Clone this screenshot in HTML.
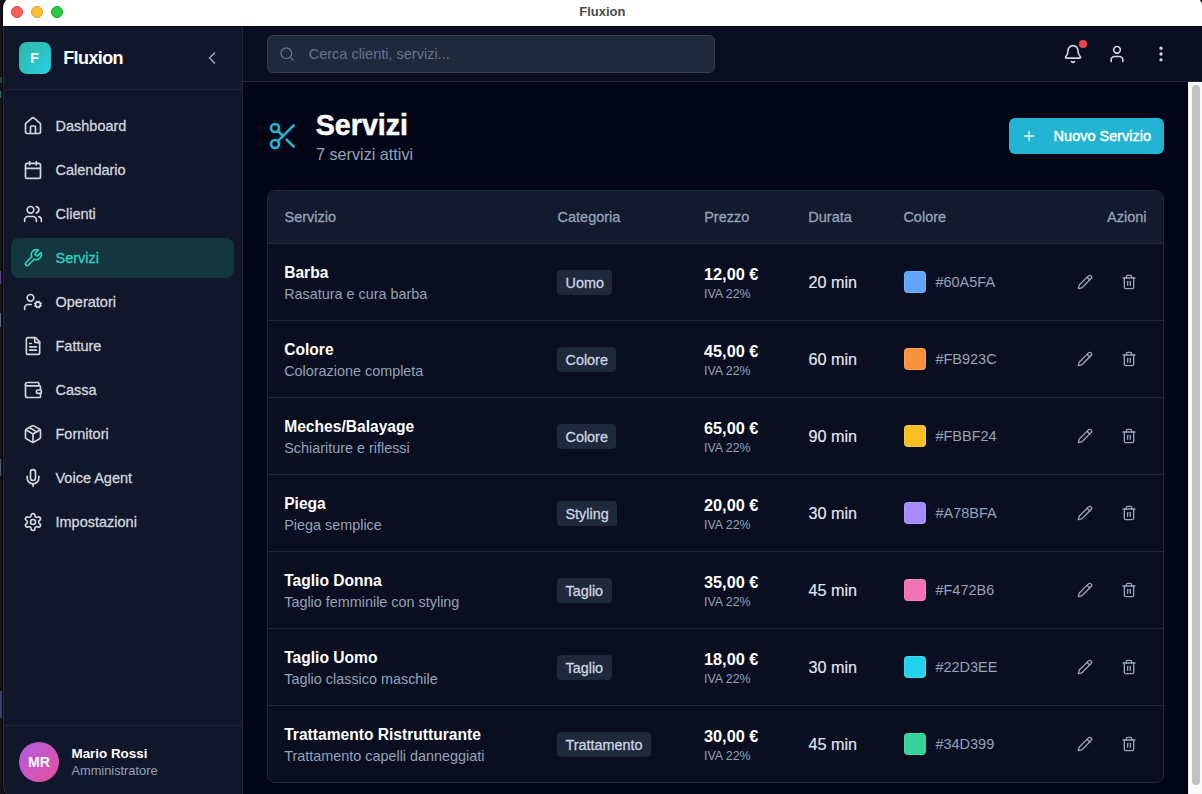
<!DOCTYPE html><html><head><meta charset="utf-8"><style>
html,body{margin:0;padding:0;width:1202px;height:794px;overflow:hidden;background:#141418;font-family:"Liberation Sans", sans-serif;}
.t{position:absolute;white-space:nowrap;line-height:1;}
.ic{position:absolute;display:block;}
.r{position:absolute;}
</style></head><body>
<div class="r" style="left:0;top:77px;width:2px;height:6px;background:#1d4843;"></div>
<div class="r" style="left:0;top:91px;width:1px;height:7px;background:#2a6f7a;"></div>
<div class="r" style="left:0;top:271px;width:1px;height:13px;background:#5a4a8a;"></div>
<div class="r" style="left:0;top:313px;width:1px;height:14px;background:#4d6788;"></div>
<div class="r" style="left:0;top:459px;width:1px;height:17px;background:#4f5d78;"></div>
<div class="r" style="left:0;top:691px;width:2px;height:27px;background:#2f4372;"></div>
<div class="r" style="left:2px;top:-5px;width:1202px;height:804px;background:#08080c;border-radius:13px;"></div>
<div class="r" style="left:3px;top:-4px;width:1200px;height:802px;background:#020617;border-radius:12px;overflow:hidden;"></div>
<div class="r" style="left:3px;top:-4px;width:1200px;height:30px;background:#ffffff;border-radius:12px 12px 0 0;"></div>
<div class="r" style="left:3px;top:26px;width:1202px;height:1px;background:#01040f;"></div>
<div class="r" style="box-sizing:border-box;left:11px;top:6px;width:12px;height:12px;border-radius:50%;background:#fe5f57;border:0.5px solid #e0443e;"></div>
<div class="r" style="box-sizing:border-box;left:31px;top:6px;width:12px;height:12px;border-radius:50%;background:#febc2e;border:0.5px solid #dea123;"></div>
<div class="r" style="box-sizing:border-box;left:51px;top:6px;width:12px;height:12px;border-radius:50%;background:#28c840;border:0.5px solid #1aab29;"></div>
<div class="t" style="left:602.3px;transform:translateX(-50%);top:5.00px;font-size:13px;color:#4a4a4a;font-weight:700;">Fluxion</div>
<div class="r" style="left:3px;top:27px;width:239px;height:771px;background:#10172a;border-right:1px solid #1e293b;border-bottom-left-radius:12px;"></div>
<div class="r" style="left:3px;top:27px;width:30px;height:771px;border-bottom-left-radius:12px;box-shadow:inset 1px 0 0 #242c3b;"></div>
<div class="r" style="left:3px;top:89px;width:239px;height:1px;background:#1e293b;"></div>
<div class="r" style="left:3px;top:725px;width:239px;height:1px;background:#1e293b;"></div>
<div class="r" style="left:19px;top:42px;width:32px;height:32px;border-radius:8px;background:linear-gradient(135deg,#2db8a8,#2ad0e2);"></div>
<div class="t" style="left:34.6px;transform:translateX(-50%);top:51.15px;font-size:14px;color:#ffffff;font-weight:700;">F</div>
<div class="t" style="left:63.2px;top:48.76px;font-size:18px;color:#ffffff;font-weight:700;letter-spacing:-0.6px;">Fluxion</div>
<svg class="ic" style="left:202px;top:48px;" width="20" height="20" viewBox="0 0 24 24" fill="none" stroke="#94a3b8" stroke-width="2" stroke-linecap="round" stroke-linejoin="round"><path d="m15 18-6-6 6-6"/></svg>
<svg class="ic" style="left:23px;top:116px;" width="20" height="20" viewBox="0 0 24 24" fill="none" stroke="#d1d6df" stroke-width="2" stroke-linecap="round" stroke-linejoin="round"><path d="M15 21v-8a1 1 0 0 0-1-1h-4a1 1 0 0 0-1 1v8"/><path d="M3 10a2 2 0 0 1 .709-1.528l7-5.999a2 2 0 0 1 2.582 0l7 5.999A2 2 0 0 1 21 10v9a2 2 0 0 1-2 2H5a2 2 0 0 1-2-2z"/></svg>
<div class="t" style="left:55.5px;top:118.73px;font-size:14.5px;color:#d1d6df;-webkit-text-stroke:0.3px currentColor;">Dashboard</div>
<svg class="ic" style="left:23px;top:160px;" width="20" height="20" viewBox="0 0 24 24" fill="none" stroke="#d1d6df" stroke-width="2" stroke-linecap="round" stroke-linejoin="round"><path d="M8 2v4"/><path d="M16 2v4"/><rect width="18" height="18" x="3" y="4" rx="2"/><path d="M3 10h18"/></svg>
<div class="t" style="left:55.5px;top:162.73px;font-size:14.5px;color:#d1d6df;-webkit-text-stroke:0.3px currentColor;">Calendario</div>
<svg class="ic" style="left:23px;top:204px;" width="20" height="20" viewBox="0 0 24 24" fill="none" stroke="#d1d6df" stroke-width="2" stroke-linecap="round" stroke-linejoin="round"><path d="M16 21v-2a4 4 0 0 0-4-4H6a4 4 0 0 0-4 4v2"/><circle cx="9" cy="7" r="4"/><path d="M22 21v-2a4 4 0 0 0-3-3.87"/><path d="M16 3.13a4 4 0 0 1 0 7.75"/></svg>
<div class="t" style="left:55.5px;top:206.73px;font-size:14.5px;color:#d1d6df;-webkit-text-stroke:0.3px currentColor;">Clienti</div>
<div class="r" style="left:11px;top:238px;width:223px;height:40px;border-radius:8px;background:#14363f;"></div>
<svg class="ic" style="left:23px;top:248px;" width="20" height="20" viewBox="0 0 24 24" fill="none" stroke="#2dd4bf" stroke-width="2" stroke-linecap="round" stroke-linejoin="round"><path d="M14.7 6.3a1 1 0 0 0 0 1.4l1.6 1.6a1 1 0 0 0 1.4 0l3.77-3.77a6 6 0 0 1-7.94 7.94l-6.91 6.91a2.12 2.12 0 0 1-3-3l6.91-6.91a6 6 0 0 1 7.94-7.94l-3.76 3.76z"/></svg>
<div class="t" style="left:55.5px;top:250.73px;font-size:14.5px;color:#2dd4bf;-webkit-text-stroke:0.3px currentColor;">Servizi</div>
<svg class="ic" style="left:23px;top:292px;" width="20" height="20" viewBox="0 0 24 24" fill="none" stroke="#d1d6df" stroke-width="2" stroke-linecap="round" stroke-linejoin="round"><circle cx="18" cy="15" r="3"/><circle cx="9" cy="7" r="4"/><path d="M10 15H6a4 4 0 0 0-4 4v2"/><path d="m21.7 16.4-.9-.3"/><path d="m15.2 13.9-.9-.3"/><path d="m16.6 18.7.3-.9"/><path d="m19.1 12.2.3-.9"/><path d="m19.6 18.7-.4-1"/><path d="m16.8 12.3-.4-1"/><path d="m14.3 16.6 1-.4"/><path d="m20.7 13.8 1-.4"/></svg>
<div class="t" style="left:55.5px;top:294.73px;font-size:14.5px;color:#d1d6df;-webkit-text-stroke:0.3px currentColor;">Operatori</div>
<svg class="ic" style="left:23px;top:336px;" width="20" height="20" viewBox="0 0 24 24" fill="none" stroke="#d1d6df" stroke-width="2" stroke-linecap="round" stroke-linejoin="round"><path d="M15 2H6a2 2 0 0 0-2 2v16a2 2 0 0 0 2 2h12a2 2 0 0 0 2-2V7Z"/><path d="M14 2v4a2 2 0 0 0 2 2h4"/><path d="M10 9H8"/><path d="M16 13H8"/><path d="M16 17H8"/></svg>
<div class="t" style="left:55.5px;top:338.73px;font-size:14.5px;color:#d1d6df;-webkit-text-stroke:0.3px currentColor;">Fatture</div>
<svg class="ic" style="left:23px;top:380px;" width="20" height="20" viewBox="0 0 24 24" fill="none" stroke="#d1d6df" stroke-width="2" stroke-linecap="round" stroke-linejoin="round"><path d="M19 7V4a1 1 0 0 0-1-1H5a2 2 0 0 0 0 4h15a1 1 0 0 1 1 1v4h-3a2 2 0 0 0 0 4h3a1 1 0 0 0 1-1v-2a1 1 0 0 0-1-1"/><path d="M3 5v14a2 2 0 0 0 2 2h15a1 1 0 0 0 1-1v-4"/></svg>
<div class="t" style="left:55.5px;top:382.73px;font-size:14.5px;color:#d1d6df;-webkit-text-stroke:0.3px currentColor;">Cassa</div>
<svg class="ic" style="left:23px;top:424px;" width="20" height="20" viewBox="0 0 24 24" fill="none" stroke="#d1d6df" stroke-width="2" stroke-linecap="round" stroke-linejoin="round"><path d="m7.5 4.27 9 5.15"/><path d="M21 8a2 2 0 0 0-1-1.73l-7-4a2 2 0 0 0-2 0l-7 4A2 2 0 0 0 3 8v8a2 2 0 0 0 1 1.73l7 4a2 2 0 0 0 2 0l7-4A2 2 0 0 0 21 16Z"/><path d="m3.3 7 8.7 5 8.7-5"/><path d="M12 22V12"/></svg>
<div class="t" style="left:55.5px;top:426.73px;font-size:14.5px;color:#d1d6df;-webkit-text-stroke:0.3px currentColor;">Fornitori</div>
<svg class="ic" style="left:23px;top:468px;" width="20" height="20" viewBox="0 0 24 24" fill="none" stroke="#d1d6df" stroke-width="2" stroke-linecap="round" stroke-linejoin="round"><path d="M12 2a3 3 0 0 0-3 3v7a3 3 0 0 0 6 0V5a3 3 0 0 0-3-3Z"/><path d="M19 10v2a7 7 0 0 1-14 0v-2"/><line x1="12" x2="12" y1="19" y2="22"/></svg>
<div class="t" style="left:55.5px;top:470.73px;font-size:14.5px;color:#d1d6df;-webkit-text-stroke:0.3px currentColor;">Voice Agent</div>
<svg class="ic" style="left:23px;top:512px;" width="20" height="20" viewBox="0 0 24 24" fill="none" stroke="#d1d6df" stroke-width="2" stroke-linecap="round" stroke-linejoin="round"><path d="M12.22 2h-.44a2 2 0 0 0-2 2v.18a2 2 0 0 1-1 1.73l-.43.25a2 2 0 0 1-2 0l-.15-.08a2 2 0 0 0-2.73.73l-.22.38a2 2 0 0 0 .73 2.73l.15.1a2 2 0 0 1 1 1.72v.51a2 2 0 0 1-1 1.74l-.15.09a2 2 0 0 0-.73 2.73l.22.38a2 2 0 0 0 2.73.73l.15-.08a2 2 0 0 1 2 0l.43.25a2 2 0 0 1 1 1.73V20a2 2 0 0 0 2 2h.44a2 2 0 0 0 2-2v-.18a2 2 0 0 1 1-1.73l.43-.25a2 2 0 0 1 2 0l.15.08a2 2 0 0 0 2.730-.73l.22-.39a2 2 0 0 0-.73-2.73l-.15-.08a2 2 0 0 1-1-1.740v-.5a2 2 0 0 1 1-1.74l.15-.09a2 2 0 0 0 .73-2.73l-.22-.38a2 2 0 0 0-2.73-.73l-.15.08a2 2 0 0 1-2 0l-.43-.25a2 2 0 0 1-1-1.73V4a2 2 0 0 0-2-2z"/><circle cx="12" cy="12" r="3"/></svg>
<div class="t" style="left:55.5px;top:514.73px;font-size:14.5px;color:#d1d6df;-webkit-text-stroke:0.3px currentColor;">Impostazioni</div>
<div class="r" style="left:19px;top:742px;width:40px;height:40px;border-radius:50%;background:linear-gradient(135deg,#b35ce6,#e64f9c);"></div>
<div class="t" style="left:39px;transform:translateX(-50%);top:754.78px;font-size:14.2px;color:#ffffff;font-weight:700;">MR</div>
<div class="t" style="left:71.5px;top:747.26px;font-size:13.4px;color:#ffffff;font-weight:700;">Mario Rossi</div>
<div class="t" style="left:71.5px;top:765.16px;font-size:12.8px;color:#94a3b8;">Amministratore</div>
<div class="r" style="left:243px;top:27px;width:959px;height:54px;background:#090e20;border-bottom:1px solid #1e293b;"></div>
<div class="r" style="left:267px;top:35px;width:446px;height:36px;border-radius:6px;background:#1e293b;border:1px solid #334155;"></div>
<svg class="ic" style="left:279px;top:46px;" width="16" height="16" viewBox="0 0 24 24" fill="none" stroke="#64748b" stroke-width="2" stroke-linecap="round" stroke-linejoin="round"><circle cx="11" cy="11" r="8"/><path d="m21 21-4.3-4.3"/></svg>
<div class="t" style="left:308.7px;top:46.93px;font-size:14.5px;color:#64748b;">Cerca clienti, servizi...</div>
<svg class="ic" style="left:1063px;top:44px;" width="20" height="20" viewBox="0 0 24 24" fill="none" stroke="#d1d6df" stroke-width="2" stroke-linecap="round" stroke-linejoin="round"><path d="M10.268 21a2 2 0 0 0 3.464 0"/><path d="M3.262 15.326A1 1 0 0 0 4 17h16a1 1 0 0 0 .74-1.673C19.41 13.956 18 12.499 18 8A6 6 0 0 0 6 8c0 4.499-1.411 5.956-2.738 7.326"/></svg>
<div class="r" style="left:1079px;top:40px;width:8px;height:8px;border-radius:50%;background:#ef4444;"></div>
<svg class="ic" style="left:1107px;top:44px;" width="20" height="20" viewBox="0 0 24 24" fill="none" stroke="#d1d6df" stroke-width="2" stroke-linecap="round" stroke-linejoin="round"><path d="M19 21v-2a4 4 0 0 0-4-4H9a4 4 0 0 0-4 4v2"/><circle cx="12" cy="7" r="4"/></svg>
<svg class="ic" style="left:1151px;top:44px;" width="20" height="20" viewBox="0 0 24 24" fill="none" stroke="#d1d6df" stroke-width="2" stroke-linecap="round" stroke-linejoin="round"><circle cx="12" cy="12" r="1"/><circle cx="12" cy="5" r="1"/><circle cx="12" cy="19" r="1"/></svg>
<div class="r" style="left:1188px;top:82px;width:14px;height:712px;background:#fafafa;border-left:1px solid #ececec;"></div>
<div class="r" style="left:1192px;top:85px;width:8px;height:700px;border-radius:4px;background:#c2c2c2;"></div>
<svg class="ic" style="left:267px;top:120px;" width="32" height="32" viewBox="0 0 24 24" fill="none" stroke="#22b4d2" stroke-width="2" stroke-linecap="round" stroke-linejoin="round"><circle cx="6" cy="6" r="3"/><path d="M8.12 8.12 12 12"/><path d="M20 4 8.12 15.88"/><circle cx="6" cy="18" r="3"/><path d="M14.8 14.8 20 20"/></svg>
<div class="t" style="left:315.8px;top:110.69px;font-size:28.6px;color:#ffffff;font-weight:700;-webkit-text-stroke:0.5px currentColor;">Servizi</div>
<div class="t" style="left:316px;top:145.79px;font-size:16.2px;color:#94a3b8;">7 servizi attivi</div>
<div class="r" style="left:1009px;top:118px;width:155px;height:36px;border-radius:6px;background:#22b4d2;"></div>
<svg class="ic" style="left:1021px;top:128px;" width="16" height="16" viewBox="0 0 24 24" fill="none" stroke="rgba(255,255,255,0.85)" stroke-width="2" stroke-linecap="round" stroke-linejoin="round"><path d="M5 12h14"/><path d="M12 5v14"/></svg>
<div class="t" style="left:1053.6px;top:128.63px;font-size:14.5px;color:#ffffff;-webkit-text-stroke:0.45px currentColor;">Nuovo Servizio</div>
<div class="r" style="left:267px;top:190px;width:895px;height:591px;border:1px solid #1e293b;border-radius:8px;background:#090e20;overflow:hidden;">
<div class="r" style="left:0;top:0;width:895px;height:52px;background:#121a2d;border-bottom:1px solid #1e293b;"></div>
<div class="r" style="left:0;top:129px;width:895px;height:1px;background:#1e293b;"></div>
<div class="r" style="left:0;top:206px;width:895px;height:1px;background:#1e293b;"></div>
<div class="r" style="left:0;top:283px;width:895px;height:1px;background:#1e293b;"></div>
<div class="r" style="left:0;top:360px;width:895px;height:1px;background:#1e293b;"></div>
<div class="r" style="left:0;top:437px;width:895px;height:1px;background:#1e293b;"></div>
<div class="r" style="left:0;top:514px;width:895px;height:1px;background:#1e293b;"></div>
</div>
<div class="t" style="left:284.5px;top:209.83px;font-size:14.5px;color:#94a3b8;-webkit-text-stroke:0.3px currentColor;">Servizio</div>
<div class="t" style="left:557.5px;top:209.83px;font-size:14.5px;color:#94a3b8;-webkit-text-stroke:0.3px currentColor;">Categoria</div>
<div class="t" style="left:704.2px;top:209.83px;font-size:14.5px;color:#94a3b8;-webkit-text-stroke:0.3px currentColor;">Prezzo</div>
<div class="t" style="left:808.3px;top:209.83px;font-size:14.5px;color:#94a3b8;-webkit-text-stroke:0.3px currentColor;">Durata</div>
<div class="t" style="left:903.4px;top:209.83px;font-size:14.5px;color:#94a3b8;-webkit-text-stroke:0.3px currentColor;">Colore</div>
<div class="t" style="right:55.5px;top:209.83px;font-size:14.5px;color:#94a3b8;-webkit-text-stroke:0.3px currentColor;">Azioni</div>
<div class="t" style="left:284.2px;top:265.29px;font-size:15.6px;color:#ffffff;font-weight:700;">Barba</div>
<div class="t" style="left:284.2px;top:287.01px;font-size:14.4px;color:#94a3b8;">Rasatura e cura barba</div>
<div class="r" style="left:557px;top:270px;height:25px;padding:0 8.5px;border-radius:4px;background:#1e293b;font-size:14.4px;line-height:26px;color:#cbd5e1;white-space:nowrap;-webkit-text-stroke:0.3px currentColor;">Uomo</div>
<div class="t" style="left:704px;top:265.70px;font-size:16.3px;color:#ffffff;font-weight:700;">12,00 €</div>
<div class="t" style="left:704px;top:287.80px;font-size:12.4px;color:#94a3b8;">IVA 22%</div>
<div class="t" style="left:808.5px;top:274.19px;font-size:16.2px;color:#e2e8f0;-webkit-text-stroke:0.15px currentColor;">20 min</div>
<div class="r" style="left:904px;top:271px;width:20px;height:20px;border-radius:4px;background:#60A5FA;border:1px solid rgba(255,255,255,0.12);"></div>
<div class="t" style="left:935.4px;top:274.93px;font-size:14.5px;color:#94a3b8;">#60A5FA</div>
<svg class="ic" style="left:1077px;top:274px;" width="16" height="16" viewBox="0 0 24 24" fill="none" stroke="#94a3b8" stroke-width="2" stroke-linecap="round" stroke-linejoin="round"><path d="M21.174 6.812a1 1 0 0 0-3.986-3.987L3.842 16.174a2 2 0 0 0-.5.83l-1.321 4.352a.5.5 0 0 0 .623.622l4.353-1.32a2 2 0 0 0 .83-.497z"/><path d="m15 5 4 4"/></svg>
<svg class="ic" style="left:1121px;top:274px;" width="16" height="16" viewBox="0 0 24 24" fill="none" stroke="#94a3b8" stroke-width="2" stroke-linecap="round" stroke-linejoin="round"><path d="M3 6h18"/><path d="M19 6v14c0 1-1 2-2 2H7c-1 0-2-1-2-2V6"/><path d="M8 6V4c0-1 1-2 2-2h4c1 0 2 1 2 2v2"/><line x1="10" x2="10" y1="11" y2="17"/><line x1="14" x2="14" y1="11" y2="17"/></svg>
<div class="t" style="left:284.2px;top:342.29px;font-size:15.6px;color:#ffffff;font-weight:700;">Colore</div>
<div class="t" style="left:284.2px;top:364.01px;font-size:14.4px;color:#94a3b8;">Colorazione completa</div>
<div class="r" style="left:557px;top:347px;height:25px;padding:0 8.5px;border-radius:4px;background:#1e293b;font-size:14.4px;line-height:26px;color:#cbd5e1;white-space:nowrap;-webkit-text-stroke:0.3px currentColor;">Colore</div>
<div class="t" style="left:704px;top:342.70px;font-size:16.3px;color:#ffffff;font-weight:700;">45,00 €</div>
<div class="t" style="left:704px;top:364.80px;font-size:12.4px;color:#94a3b8;">IVA 22%</div>
<div class="t" style="left:808.5px;top:351.19px;font-size:16.2px;color:#e2e8f0;-webkit-text-stroke:0.15px currentColor;">60 min</div>
<div class="r" style="left:904px;top:348px;width:20px;height:20px;border-radius:4px;background:#FB923C;border:1px solid rgba(255,255,255,0.12);"></div>
<div class="t" style="left:935.4px;top:351.93px;font-size:14.5px;color:#94a3b8;">#FB923C</div>
<svg class="ic" style="left:1077px;top:351px;" width="16" height="16" viewBox="0 0 24 24" fill="none" stroke="#94a3b8" stroke-width="2" stroke-linecap="round" stroke-linejoin="round"><path d="M21.174 6.812a1 1 0 0 0-3.986-3.987L3.842 16.174a2 2 0 0 0-.5.83l-1.321 4.352a.5.5 0 0 0 .623.622l4.353-1.32a2 2 0 0 0 .83-.497z"/><path d="m15 5 4 4"/></svg>
<svg class="ic" style="left:1121px;top:351px;" width="16" height="16" viewBox="0 0 24 24" fill="none" stroke="#94a3b8" stroke-width="2" stroke-linecap="round" stroke-linejoin="round"><path d="M3 6h18"/><path d="M19 6v14c0 1-1 2-2 2H7c-1 0-2-1-2-2V6"/><path d="M8 6V4c0-1 1-2 2-2h4c1 0 2 1 2 2v2"/><line x1="10" x2="10" y1="11" y2="17"/><line x1="14" x2="14" y1="11" y2="17"/></svg>
<div class="t" style="left:284.2px;top:419.29px;font-size:15.6px;color:#ffffff;font-weight:700;">Meches/Balayage</div>
<div class="t" style="left:284.2px;top:441.01px;font-size:14.4px;color:#94a3b8;">Schiariture e riflessi</div>
<div class="r" style="left:557px;top:424px;height:25px;padding:0 8.5px;border-radius:4px;background:#1e293b;font-size:14.4px;line-height:26px;color:#cbd5e1;white-space:nowrap;-webkit-text-stroke:0.3px currentColor;">Colore</div>
<div class="t" style="left:704px;top:419.70px;font-size:16.3px;color:#ffffff;font-weight:700;">65,00 €</div>
<div class="t" style="left:704px;top:441.80px;font-size:12.4px;color:#94a3b8;">IVA 22%</div>
<div class="t" style="left:808.5px;top:428.19px;font-size:16.2px;color:#e2e8f0;-webkit-text-stroke:0.15px currentColor;">90 min</div>
<div class="r" style="left:904px;top:425px;width:20px;height:20px;border-radius:4px;background:#FBBF24;border:1px solid rgba(255,255,255,0.12);"></div>
<div class="t" style="left:935.4px;top:428.93px;font-size:14.5px;color:#94a3b8;">#FBBF24</div>
<svg class="ic" style="left:1077px;top:428px;" width="16" height="16" viewBox="0 0 24 24" fill="none" stroke="#94a3b8" stroke-width="2" stroke-linecap="round" stroke-linejoin="round"><path d="M21.174 6.812a1 1 0 0 0-3.986-3.987L3.842 16.174a2 2 0 0 0-.5.83l-1.321 4.352a.5.5 0 0 0 .623.622l4.353-1.32a2 2 0 0 0 .83-.497z"/><path d="m15 5 4 4"/></svg>
<svg class="ic" style="left:1121px;top:428px;" width="16" height="16" viewBox="0 0 24 24" fill="none" stroke="#94a3b8" stroke-width="2" stroke-linecap="round" stroke-linejoin="round"><path d="M3 6h18"/><path d="M19 6v14c0 1-1 2-2 2H7c-1 0-2-1-2-2V6"/><path d="M8 6V4c0-1 1-2 2-2h4c1 0 2 1 2 2v2"/><line x1="10" x2="10" y1="11" y2="17"/><line x1="14" x2="14" y1="11" y2="17"/></svg>
<div class="t" style="left:284.2px;top:496.29px;font-size:15.6px;color:#ffffff;font-weight:700;">Piega</div>
<div class="t" style="left:284.2px;top:518.01px;font-size:14.4px;color:#94a3b8;">Piega semplice</div>
<div class="r" style="left:557px;top:501px;height:25px;padding:0 8.5px;border-radius:4px;background:#1e293b;font-size:14.4px;line-height:26px;color:#cbd5e1;white-space:nowrap;-webkit-text-stroke:0.3px currentColor;">Styling</div>
<div class="t" style="left:704px;top:496.70px;font-size:16.3px;color:#ffffff;font-weight:700;">20,00 €</div>
<div class="t" style="left:704px;top:518.80px;font-size:12.4px;color:#94a3b8;">IVA 22%</div>
<div class="t" style="left:808.5px;top:505.19px;font-size:16.2px;color:#e2e8f0;-webkit-text-stroke:0.15px currentColor;">30 min</div>
<div class="r" style="left:904px;top:502px;width:20px;height:20px;border-radius:4px;background:#A78BFA;border:1px solid rgba(255,255,255,0.12);"></div>
<div class="t" style="left:935.4px;top:505.93px;font-size:14.5px;color:#94a3b8;">#A78BFA</div>
<svg class="ic" style="left:1077px;top:505px;" width="16" height="16" viewBox="0 0 24 24" fill="none" stroke="#94a3b8" stroke-width="2" stroke-linecap="round" stroke-linejoin="round"><path d="M21.174 6.812a1 1 0 0 0-3.986-3.987L3.842 16.174a2 2 0 0 0-.5.83l-1.321 4.352a.5.5 0 0 0 .623.622l4.353-1.32a2 2 0 0 0 .83-.497z"/><path d="m15 5 4 4"/></svg>
<svg class="ic" style="left:1121px;top:505px;" width="16" height="16" viewBox="0 0 24 24" fill="none" stroke="#94a3b8" stroke-width="2" stroke-linecap="round" stroke-linejoin="round"><path d="M3 6h18"/><path d="M19 6v14c0 1-1 2-2 2H7c-1 0-2-1-2-2V6"/><path d="M8 6V4c0-1 1-2 2-2h4c1 0 2 1 2 2v2"/><line x1="10" x2="10" y1="11" y2="17"/><line x1="14" x2="14" y1="11" y2="17"/></svg>
<div class="t" style="left:284.2px;top:573.29px;font-size:15.6px;color:#ffffff;font-weight:700;">Taglio Donna</div>
<div class="t" style="left:284.2px;top:595.01px;font-size:14.4px;color:#94a3b8;">Taglio femminile con styling</div>
<div class="r" style="left:557px;top:578px;height:25px;padding:0 8.5px;border-radius:4px;background:#1e293b;font-size:14.4px;line-height:26px;color:#cbd5e1;white-space:nowrap;-webkit-text-stroke:0.3px currentColor;">Taglio</div>
<div class="t" style="left:704px;top:573.70px;font-size:16.3px;color:#ffffff;font-weight:700;">35,00 €</div>
<div class="t" style="left:704px;top:595.80px;font-size:12.4px;color:#94a3b8;">IVA 22%</div>
<div class="t" style="left:808.5px;top:582.19px;font-size:16.2px;color:#e2e8f0;-webkit-text-stroke:0.15px currentColor;">45 min</div>
<div class="r" style="left:904px;top:579px;width:20px;height:20px;border-radius:4px;background:#F472B6;border:1px solid rgba(255,255,255,0.12);"></div>
<div class="t" style="left:935.4px;top:582.93px;font-size:14.5px;color:#94a3b8;">#F472B6</div>
<svg class="ic" style="left:1077px;top:582px;" width="16" height="16" viewBox="0 0 24 24" fill="none" stroke="#94a3b8" stroke-width="2" stroke-linecap="round" stroke-linejoin="round"><path d="M21.174 6.812a1 1 0 0 0-3.986-3.987L3.842 16.174a2 2 0 0 0-.5.83l-1.321 4.352a.5.5 0 0 0 .623.622l4.353-1.32a2 2 0 0 0 .83-.497z"/><path d="m15 5 4 4"/></svg>
<svg class="ic" style="left:1121px;top:582px;" width="16" height="16" viewBox="0 0 24 24" fill="none" stroke="#94a3b8" stroke-width="2" stroke-linecap="round" stroke-linejoin="round"><path d="M3 6h18"/><path d="M19 6v14c0 1-1 2-2 2H7c-1 0-2-1-2-2V6"/><path d="M8 6V4c0-1 1-2 2-2h4c1 0 2 1 2 2v2"/><line x1="10" x2="10" y1="11" y2="17"/><line x1="14" x2="14" y1="11" y2="17"/></svg>
<div class="t" style="left:284.2px;top:650.29px;font-size:15.6px;color:#ffffff;font-weight:700;">Taglio Uomo</div>
<div class="t" style="left:284.2px;top:672.01px;font-size:14.4px;color:#94a3b8;">Taglio classico maschile</div>
<div class="r" style="left:557px;top:655px;height:25px;padding:0 8.5px;border-radius:4px;background:#1e293b;font-size:14.4px;line-height:26px;color:#cbd5e1;white-space:nowrap;-webkit-text-stroke:0.3px currentColor;">Taglio</div>
<div class="t" style="left:704px;top:650.70px;font-size:16.3px;color:#ffffff;font-weight:700;">18,00 €</div>
<div class="t" style="left:704px;top:672.80px;font-size:12.4px;color:#94a3b8;">IVA 22%</div>
<div class="t" style="left:808.5px;top:659.19px;font-size:16.2px;color:#e2e8f0;-webkit-text-stroke:0.15px currentColor;">30 min</div>
<div class="r" style="left:904px;top:656px;width:20px;height:20px;border-radius:4px;background:#22D3EE;border:1px solid rgba(255,255,255,0.12);"></div>
<div class="t" style="left:935.4px;top:659.93px;font-size:14.5px;color:#94a3b8;">#22D3EE</div>
<svg class="ic" style="left:1077px;top:659px;" width="16" height="16" viewBox="0 0 24 24" fill="none" stroke="#94a3b8" stroke-width="2" stroke-linecap="round" stroke-linejoin="round"><path d="M21.174 6.812a1 1 0 0 0-3.986-3.987L3.842 16.174a2 2 0 0 0-.5.83l-1.321 4.352a.5.5 0 0 0 .623.622l4.353-1.32a2 2 0 0 0 .83-.497z"/><path d="m15 5 4 4"/></svg>
<svg class="ic" style="left:1121px;top:659px;" width="16" height="16" viewBox="0 0 24 24" fill="none" stroke="#94a3b8" stroke-width="2" stroke-linecap="round" stroke-linejoin="round"><path d="M3 6h18"/><path d="M19 6v14c0 1-1 2-2 2H7c-1 0-2-1-2-2V6"/><path d="M8 6V4c0-1 1-2 2-2h4c1 0 2 1 2 2v2"/><line x1="10" x2="10" y1="11" y2="17"/><line x1="14" x2="14" y1="11" y2="17"/></svg>
<div class="t" style="left:284.2px;top:727.29px;font-size:15.6px;color:#ffffff;font-weight:700;">Trattamento Ristrutturante</div>
<div class="t" style="left:284.2px;top:749.01px;font-size:14.4px;color:#94a3b8;">Trattamento capelli danneggiati</div>
<div class="r" style="left:557px;top:732px;height:25px;padding:0 8.5px;border-radius:4px;background:#1e293b;font-size:14.4px;line-height:26px;color:#cbd5e1;white-space:nowrap;-webkit-text-stroke:0.3px currentColor;">Trattamento</div>
<div class="t" style="left:704px;top:727.70px;font-size:16.3px;color:#ffffff;font-weight:700;">30,00 €</div>
<div class="t" style="left:704px;top:749.80px;font-size:12.4px;color:#94a3b8;">IVA 22%</div>
<div class="t" style="left:808.5px;top:736.19px;font-size:16.2px;color:#e2e8f0;-webkit-text-stroke:0.15px currentColor;">45 min</div>
<div class="r" style="left:904px;top:733px;width:20px;height:20px;border-radius:4px;background:#34D399;border:1px solid rgba(255,255,255,0.12);"></div>
<div class="t" style="left:935.4px;top:736.93px;font-size:14.5px;color:#94a3b8;">#34D399</div>
<svg class="ic" style="left:1077px;top:736px;" width="16" height="16" viewBox="0 0 24 24" fill="none" stroke="#94a3b8" stroke-width="2" stroke-linecap="round" stroke-linejoin="round"><path d="M21.174 6.812a1 1 0 0 0-3.986-3.987L3.842 16.174a2 2 0 0 0-.5.83l-1.321 4.352a.5.5 0 0 0 .623.622l4.353-1.32a2 2 0 0 0 .83-.497z"/><path d="m15 5 4 4"/></svg>
<svg class="ic" style="left:1121px;top:736px;" width="16" height="16" viewBox="0 0 24 24" fill="none" stroke="#94a3b8" stroke-width="2" stroke-linecap="round" stroke-linejoin="round"><path d="M3 6h18"/><path d="M19 6v14c0 1-1 2-2 2H7c-1 0-2-1-2-2V6"/><path d="M8 6V4c0-1 1-2 2-2h4c1 0 2 1 2 2v2"/><line x1="10" x2="10" y1="11" y2="17"/><line x1="14" x2="14" y1="11" y2="17"/></svg>
</body></html>
